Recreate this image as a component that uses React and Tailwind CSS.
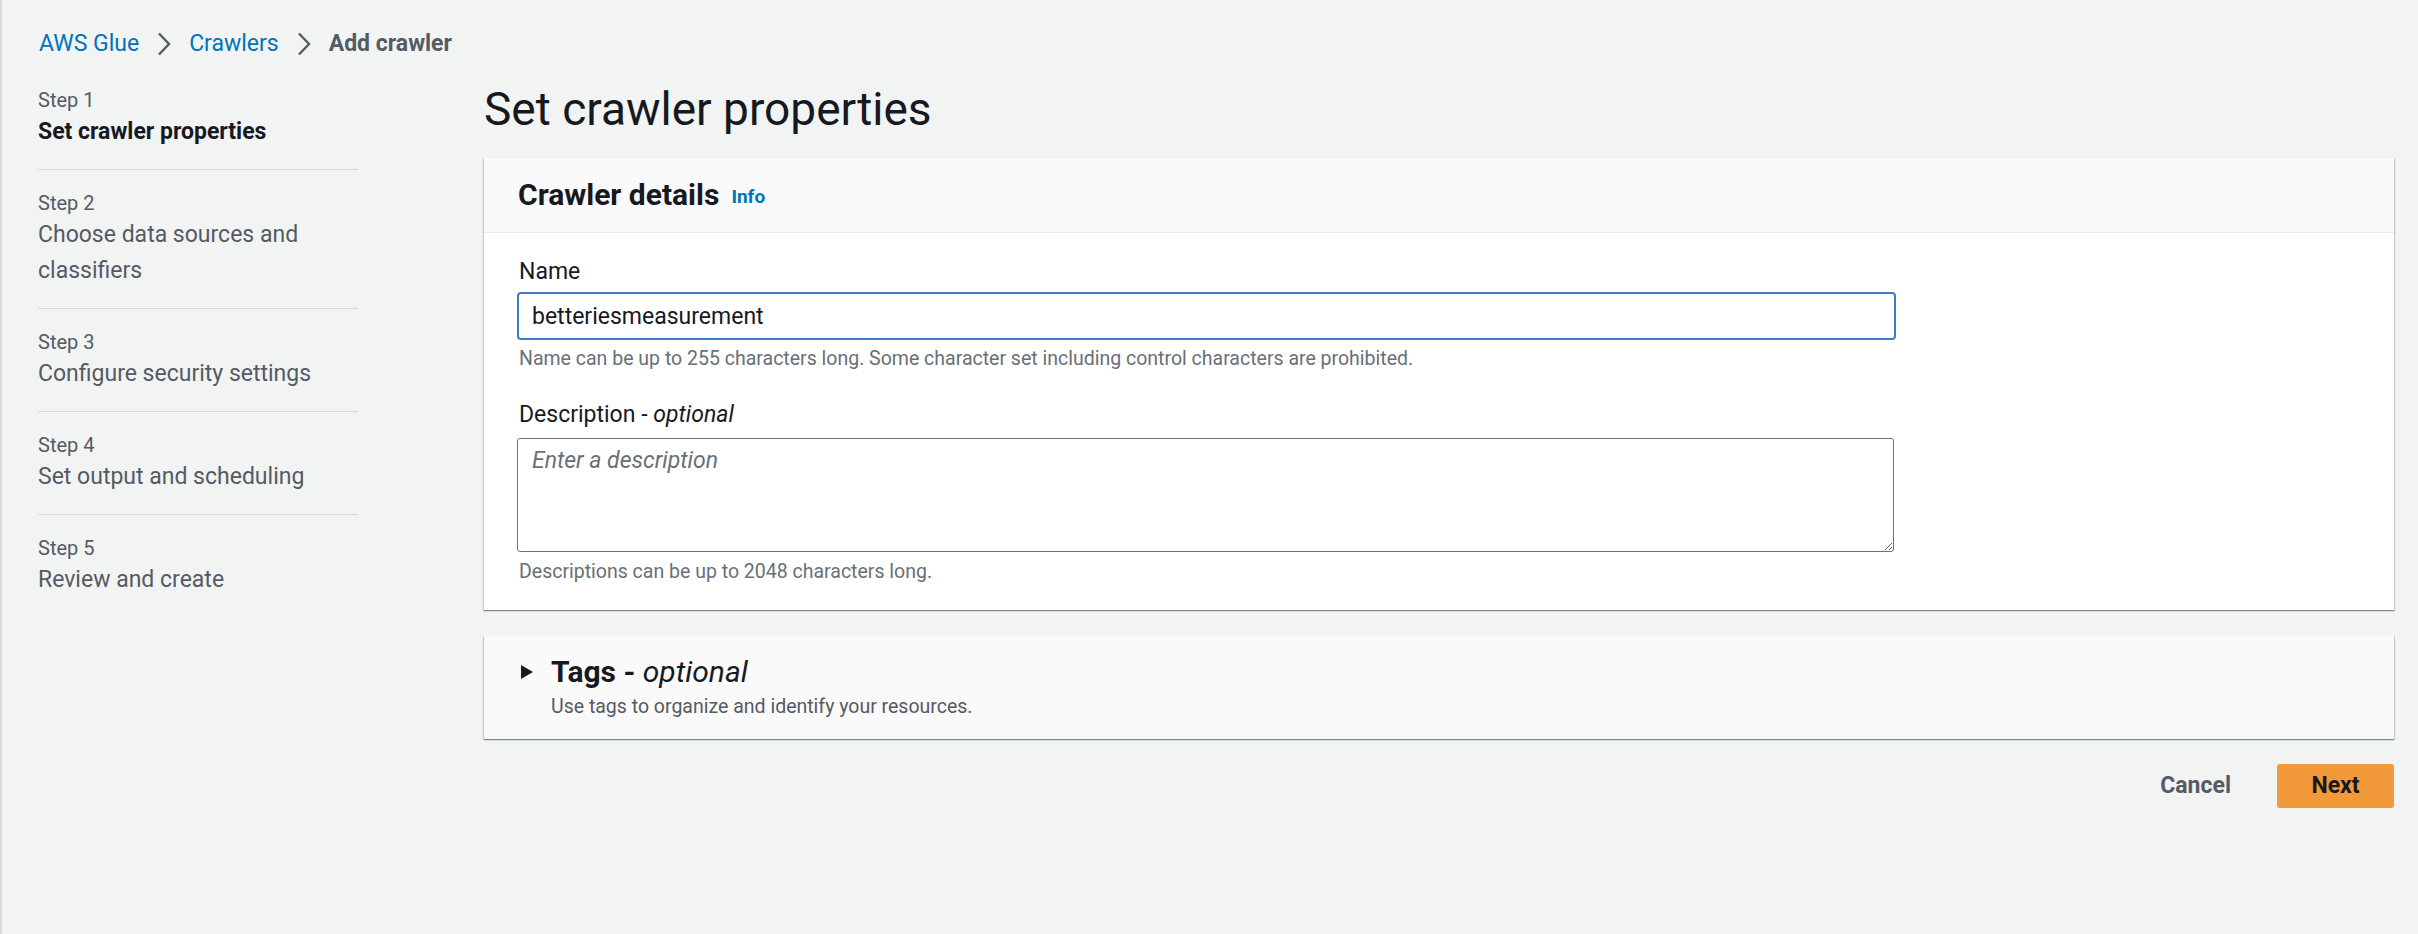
import React from "react";

const steps = [
  { label: "Step 1", title: "Set crawler properties", active: true },
  { label: "Step 2", title: "Choose data sources and classifiers" },
  { label: "Step 3", title: "Configure security settings" },
  { label: "Step 4", title: "Set output and scheduling" },
  { label: "Step 5", title: "Review and create" },
];

function Chevron() {
  return (
    <svg width="14" height="24" viewBox="0 0 14 24" fill="none" className="shrink-0">
      <path d="M2 1.5 L12 12 L2 22.5" stroke="#545b64" strokeWidth="2.4" />
    </svg>
  );
}

export default function App() {
  return (
    <main
      className="min-h-[934px] pt-[28px] bg-[#f2f3f3] text-[#16191f] border-l-2 border-[#d5dbdb]"
      style={{ fontFamily: "Roboto, 'Open Sans', sans-serif" }}
    >
      {/* Breadcrumb */}
      <nav className="flex items-center h-[32px] pl-[37px] text-[23px] leading-[32px]">
        <span className="text-[#0073bb]">AWS Glue</span>
        <span className="mx-[18px] flex items-center"><Chevron /></span>
        <span className="text-[#0073bb]">Crawlers</span>
        <span className="mx-[18px] flex items-center"><Chevron /></span>
        <span className="font-bold text-[#545b64]">Add crawler</span>
      </nav>

      <div className="flex mt-[7px] pl-[36px] pr-[24px]">
        {/* Wizard steps */}
        <ul className="w-[320px] shrink-0">
          {steps.map((s, i) => (
            <li
              key={s.label}
              className={`py-[19px] ${i < steps.length - 1 ? "border-b border-[#d5dbdb]" : ""}`}
            >
              <div className="text-[20px] leading-[28px] text-[#545b64]">{s.label}</div>
              <div
                className={
                  s.active
                    ? "text-[23px] leading-[36px] font-bold text-[#16191f]"
                    : "text-[23px] leading-[36px] text-[#545b64]"
                }
              >
                {s.title}
              </div>
            </li>
          ))}
        </ul>

        {/* Main content */}
        <div className="flex-1 ml-[126px]">
          <h1 className="mt-[14px] text-[46px] leading-[56px] font-normal">Set crawler properties</h1>

          {/* Crawler details card */}
          <section className="mt-[21px] bg-white shadow-[0_1px_1px_0_rgba(0,28,36,0.3),1px_1px_1px_0_rgba(0,28,36,0.15),-1px_1px_1px_0_rgba(0,28,36,0.15)]">
            <header className="h-[75px] flex items-center px-[34px] bg-[#fafafa] border-b border-[#eaeded]">
              <h2 className="text-[30px] leading-[36px] font-bold">Crawler details</h2>
              <span className="ml-[12px] mt-[4px] text-[19px] font-bold text-[#0073bb]">Info</span>
            </header>

            <div className="px-[33px] pt-[23px] pb-[24px]">
              <label className="block text-[23px] leading-[32px] pl-[2px]">Name</label>
              <input
                defaultValue="betteriesmeasurement"
                className="mt-[4px] block w-[1379px] h-[48px] px-[13px] border-2 border-[#3b7dc4] rounded-[4px] text-[23px] text-[#16191f] outline-none bg-white"
                style={{ fontFamily: "Roboto, sans-serif" }}
              />
              <p className="mt-[5px] text-[19.5px] leading-[28px] text-[#687078] pl-[2px]">
                Name can be up to 255 characters long. Some character set including control characters are prohibited.
              </p>

              <label className="block mt-[26px] text-[23px] leading-[32px] pl-[2px]">
                Description - <i>optional</i>
              </label>
              <textarea
                placeholder="Enter a description"
                className="mt-[7px] block w-[1377px] h-[114px] px-[14px] py-[6px] border border-[#687078] rounded-[3px] text-[23px] leading-[32px] bg-white outline-none placeholder:italic placeholder:text-[#687078]"
                style={{ fontFamily: "Roboto, sans-serif" }}
              />
              <p className="mt-[6px] text-[19.5px] leading-[28px] text-[#687078] pl-[2px]">
                Descriptions can be up to 2048 characters long.
              </p>
            </div>
          </section>

          {/* Tags card */}
          <section className="mt-[26px] bg-[#fafafa] pt-[18px] pb-[18px] pl-[37px] shadow-[0_1px_1px_0_rgba(0,28,36,0.3),1px_1px_1px_0_rgba(0,28,36,0.15),-1px_1px_1px_0_rgba(0,28,36,0.15)]">
            <div className="flex items-center h-[36px]">
              <svg width="12" height="14" viewBox="0 0 12 14" className="shrink-0">
                <path d="M0 0 L12 7 L0 14 Z" fill="#16191f" />
              </svg>
              <h2 className="ml-[18px] text-[30px] leading-[36px] font-bold">
                Tags - <i className="font-normal">optional</i>
              </h2>
            </div>
            <p className="mt-[3px] ml-[30px] text-[19.5px] leading-[28px] text-[#545b64]">
              Use tags to organize and identify your resources.
            </p>
          </section>

          {/* Actions */}
          <div className="mt-[25px] flex justify-end items-center">
            <button className="h-[44px] px-[10px] text-[23px] font-bold text-[#545b64]">Cancel</button>
            <button className="ml-[36px] h-[44px] w-[117px] rounded-[3px] bg-[#f2993a] text-[23px] font-bold text-[#16191f]">
              Next
            </button>
          </div>
        </div>
      </div>
    </main>
  );
}
